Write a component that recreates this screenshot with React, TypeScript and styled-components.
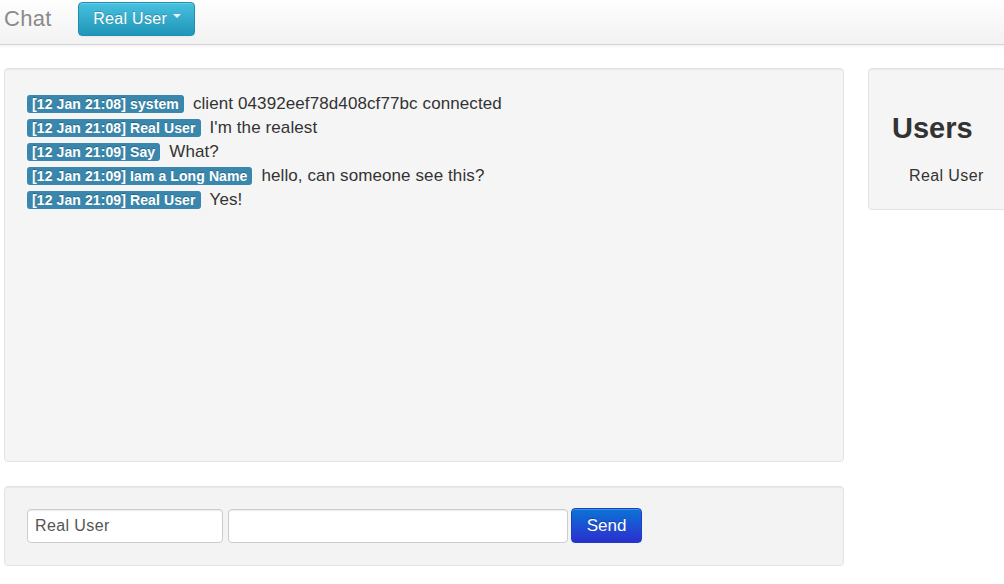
import styled, { createGlobalStyle } from 'styled-components'

const GlobalStyle = createGlobalStyle`
  html, body {
    margin: 0;
    padding: 0;
    background: #ffffff;
    overflow: hidden;
  }
  body {
    font-family: "Liberation Sans", Arial, sans-serif;
    font-size: 15px;
    color: #333333;
  }
`

const Navbar = styled.div`
  height: 44px;
  display: flex;
  align-items: center;
  gap: 26px;
  padding: 0 4px;
  background: linear-gradient(to bottom, #ffffff, #f2f2f2);
  border-bottom: 1px solid #d4d4d4;
  box-shadow: 0 1px 4px rgba(0, 0, 0, 0.065);
  margin-top: -4px;
  padding-top: 4px;
`

const Brand = styled.div`
  font-size: 22px;
  letter-spacing: 0.3px;
  color: #8a8a8a;
  font-weight: 300;
  margin-top: -6px;
`

const InfoButton = styled.button`
  height: 34px;
  width: 117px;
  margin-top: -6px;
  border: 1px solid #1f8fb0;
  border-radius: 4px;
  background: linear-gradient(to bottom, #48c0df, #2096b8);
  color: #ffffff;
  font-family: inherit;
  font-size: 16px;
  letter-spacing: 0.3px;
  text-shadow: 0 -1px 0 rgba(0, 0, 0, 0.2);
  box-shadow: inset 0 1px 0 rgba(255, 255, 255, 0.2), 0 1px 2px rgba(0, 0, 0, 0.05);
  display: flex;
  align-items: center;
  justify-content: center;
  gap: 6px;
  padding: 0 0 0 2px;
`

const Caret = styled.span`
  width: 0;
  height: 0;
  border-left: 4px solid transparent;
  border-right: 4px solid transparent;
  border-top: 4px solid #ffffff;
  margin-top: -6px;
  opacity: 0.9;
`

const Page = styled.div`
  display: flex;
  gap: 24px;
  padding: 23px 0 0 4px;
  width: 1200px;
`

const MainColumn = styled.div`
  width: 840px;
  display: flex;
  flex-direction: column;
  gap: 24px;
`

const Well = styled.div<{ $height: number }>`
  box-sizing: border-box;
  height: ${({ $height }) => $height}px;
  background: #f5f5f5;
  border: 1px solid #e3e3e3;
  border-radius: 4px;
  box-shadow: inset 0 1px 1px rgba(0, 0, 0, 0.05);
`

const ChatWell = styled(Well)`
  padding: 23px 22px;
`

const Message = styled.div`
  display: flex;
  align-items: center;
  height: 24px;
  gap: 9px;
  font-size: 17px;
  letter-spacing: 0.1px;
  color: #333333;
`

const Label = styled.span`
  background: #3a87ad;
  color: #ffffff;
  font-weight: bold;
  font-size: 14px;
  letter-spacing: 0.1px;
  line-height: 18px;
  height: 18px;
  padding: 0 5px;
  border-radius: 3px;
  text-shadow: 0 -1px 0 rgba(0, 0, 0, 0.25);
  white-space: nowrap;
`

const FormWell = styled(Well)`
  display: flex;
  align-items: center;
  padding: 0 22px;
  background: #f3f3f3;
`

const Input = styled.input<{ $width: number }>`
  box-sizing: border-box;
  width: ${({ $width }) => $width}px;
  height: 34px;
  margin-right: 5px;
  padding: 4px 7px;
  border: 1px solid #cccccc;
  border-radius: 4px;
  background: #ffffff;
  font-family: inherit;
  font-size: 16px;
  letter-spacing: 0.4px;
  color: #555555;
  box-shadow: inset 0 1px 1px rgba(0, 0, 0, 0.075);
  outline: none;
`

const PrimaryButton = styled.button`
  height: 35px;
  width: 71px;
  margin-left: -2px;
  margin-top: -1px;
  border: 1px solid #1a3fc2;
  border-radius: 4px;
  background: linear-gradient(to bottom, #0b74d6, #2b2fcf);
  color: #ffffff;
  font-family: inherit;
  font-size: 17px;
  text-shadow: 0 -1px 0 rgba(0, 0, 0, 0.25);
  box-shadow: inset 0 1px 0 rgba(255, 255, 255, 0.2);
`

const UsersWell = styled(Well)`
  width: 220px;
  padding: 39px 23px 0;
`

const UsersTitle = styled.h2`
  margin: 0;
  font-size: 29px;
  line-height: 40px;
  font-weight: bold;
  color: #333333;
`

const UserItem = styled.div`
  margin-top: 18px;
  padding-left: 17px;
  font-size: 16px;
  letter-spacing: 0.4px;
  line-height: 20px;
  color: #333333;
`

const messages = [
  { time: '12 Jan 21:08', name: 'system', text: 'client 04392eef78d408cf77bc connected' },
  { time: '12 Jan 21:08', name: 'Real User', text: "I'm the realest" },
  { time: '12 Jan 21:09', name: 'Say', text: 'What?' },
  { time: '12 Jan 21:09', name: 'Iam a Long Name', text: 'hello, can someone see this?' },
  { time: '12 Jan 21:09', name: 'Real User', text: 'Yes!' },
]

export default function App() {
  return (
    <>
      <GlobalStyle />
      <Navbar>
        <Brand>Chat</Brand>
        <InfoButton>
          Real User <Caret />
        </InfoButton>
      </Navbar>
      <Page>
        <MainColumn>
          <ChatWell $height={394}>
            {messages.map((m, i) => (
              <Message key={i}>
                <Label>
                  [{m.time}] {m.name}
                </Label>
                <span>{m.text}</span>
              </Message>
            ))}
          </ChatWell>
          <FormWell $height={80}>
            <Input $width={196} defaultValue="Real User" />
            <Input $width={340} defaultValue="" />
            <PrimaryButton>Send</PrimaryButton>
          </FormWell>
        </MainColumn>
        <UsersWell $height={142}>
          <UsersTitle>Users</UsersTitle>
          <UserItem>Real User</UserItem>
        </UsersWell>
      </Page>
    </>
  )
}
